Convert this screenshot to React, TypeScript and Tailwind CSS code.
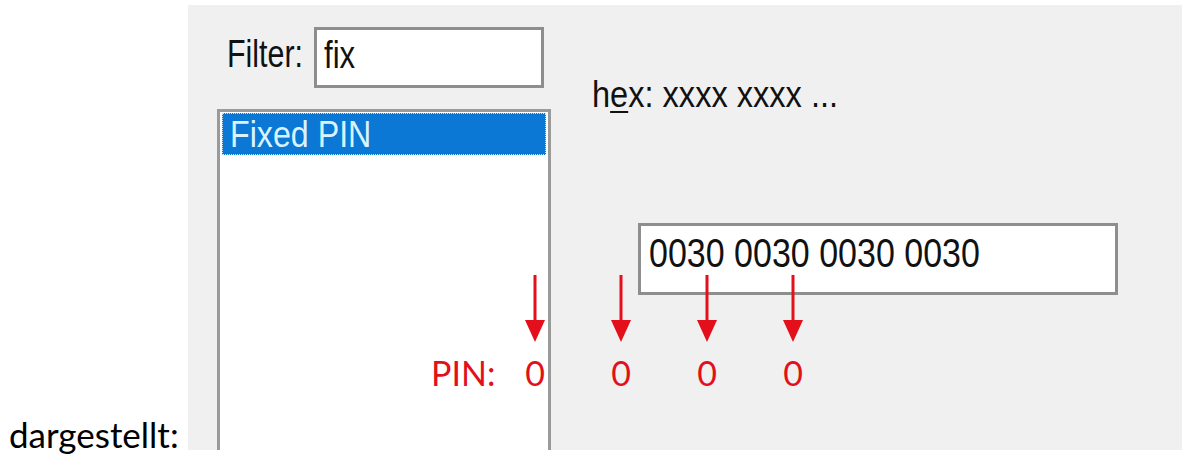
import React from 'react';

const RED = '#e3101b';

/**
 * Roter Pfeil nach unten (Annotation über dem Dialog)
 */
function DownArrow() {
  return (
    <svg width="20" height="67" viewBox="0 0 20 67" className="block">
      <rect x="8.5" y="0" width="3" height="48" fill={RED} />
      <polygon points="0,45 20,45 10,67" fill={RED} />
    </svg>
  );
}

function PinColumn() {
  return (
    <div className="flex w-[86px] flex-col items-center">
      <DownArrow />
      <span className="mt-[14px] text-[34px] leading-[34px]">0</span>
    </div>
  );
}

export default function App() {
  return (
    <div className="flex w-[1185px] h-[457px] bg-white overflow-hidden">
      {/* Fließtext links */}
      <div className="flex w-[188px] flex-col justify-end pb-[5px] pl-[9px]">
        <span className="text-[35px] leading-[35px] text-black font-['Lato','Open_Sans',sans-serif]">
          dargestellt:
        </span>
      </div>

      {/* Dialogausschnitt */}
      <div className="relative mt-[5px] flex h-[445px] w-[994px] bg-[#f0f0f0] font-['Liberation_Sans',Arial,sans-serif] text-[#111]">
        {/* Linke Spalte: Filter + Liste */}
        <div className="ml-[29px] flex w-[334px] flex-col pt-[22px]">
          <div className="flex h-[61px] items-start">
            <div className="w-[107px] pl-[10px] pt-[8px]">
              <span className="inline-block origin-left scale-x-[0.8] text-[38px] leading-[38px]">Filter:</span>
            </div>
            <div className="-ml-[10px] h-[61px] w-[230px] shrink-0 border-[3px] border-[#8e8e8e] bg-white pl-[7px] pt-[6px]">
              <span className="inline-block origin-left scale-x-[0.82] text-[38px] leading-[38px]">fix</span>
            </div>
          </div>

          <div className="mt-[21px] flex-1 border-[3px] border-b-0 border-[#9a9a9a] bg-white pt-[1px] px-[2px]">
            <div className="h-[42px] border border-dotted border-[#bfe3ff] bg-[#0a78d4] pl-[7px] pt-[1px] text-[#d8f3ff]">
              <span className="inline-block origin-left scale-x-[0.87] text-[37px] leading-[40px]">Fixed PIN</span>
            </div>
          </div>
        </div>

        {/* Rechte Spalte: hex-Eingabe */}
        <div className="ml-[41px] flex flex-col pt-[71px]">
          <span className="inline-block origin-left scale-x-[0.88] text-[37px] leading-[37px]">
            h<span className="underline decoration-2 underline-offset-4">e</span>x: xxxx xxxx ...
          </span>
          <div className="ml-[46px] mt-[110px] h-[72px] w-[480px] border-[3px] border-[#8e8e8e] bg-white pl-[8px] pt-[7px]">
            <span className="inline-block origin-left scale-x-[0.85] text-[40px] leading-[40px]">0030 0030 0030 0030</span>
          </div>
        </div>

        {/* Annotation: Pfeile und PIN */}
        <div
          className="absolute left-[243px] top-[270px] flex items-end font-['Lato','Open_Sans',sans-serif]"
          style={{ color: RED }}
        >
          <span className="-mr-[4px] w-[65px] text-[34px] leading-[34px]">PIN:</span>
          <PinColumn />
          <PinColumn />
          <PinColumn />
          <PinColumn />
        </div>
      </div>
    </div>
  );
}
